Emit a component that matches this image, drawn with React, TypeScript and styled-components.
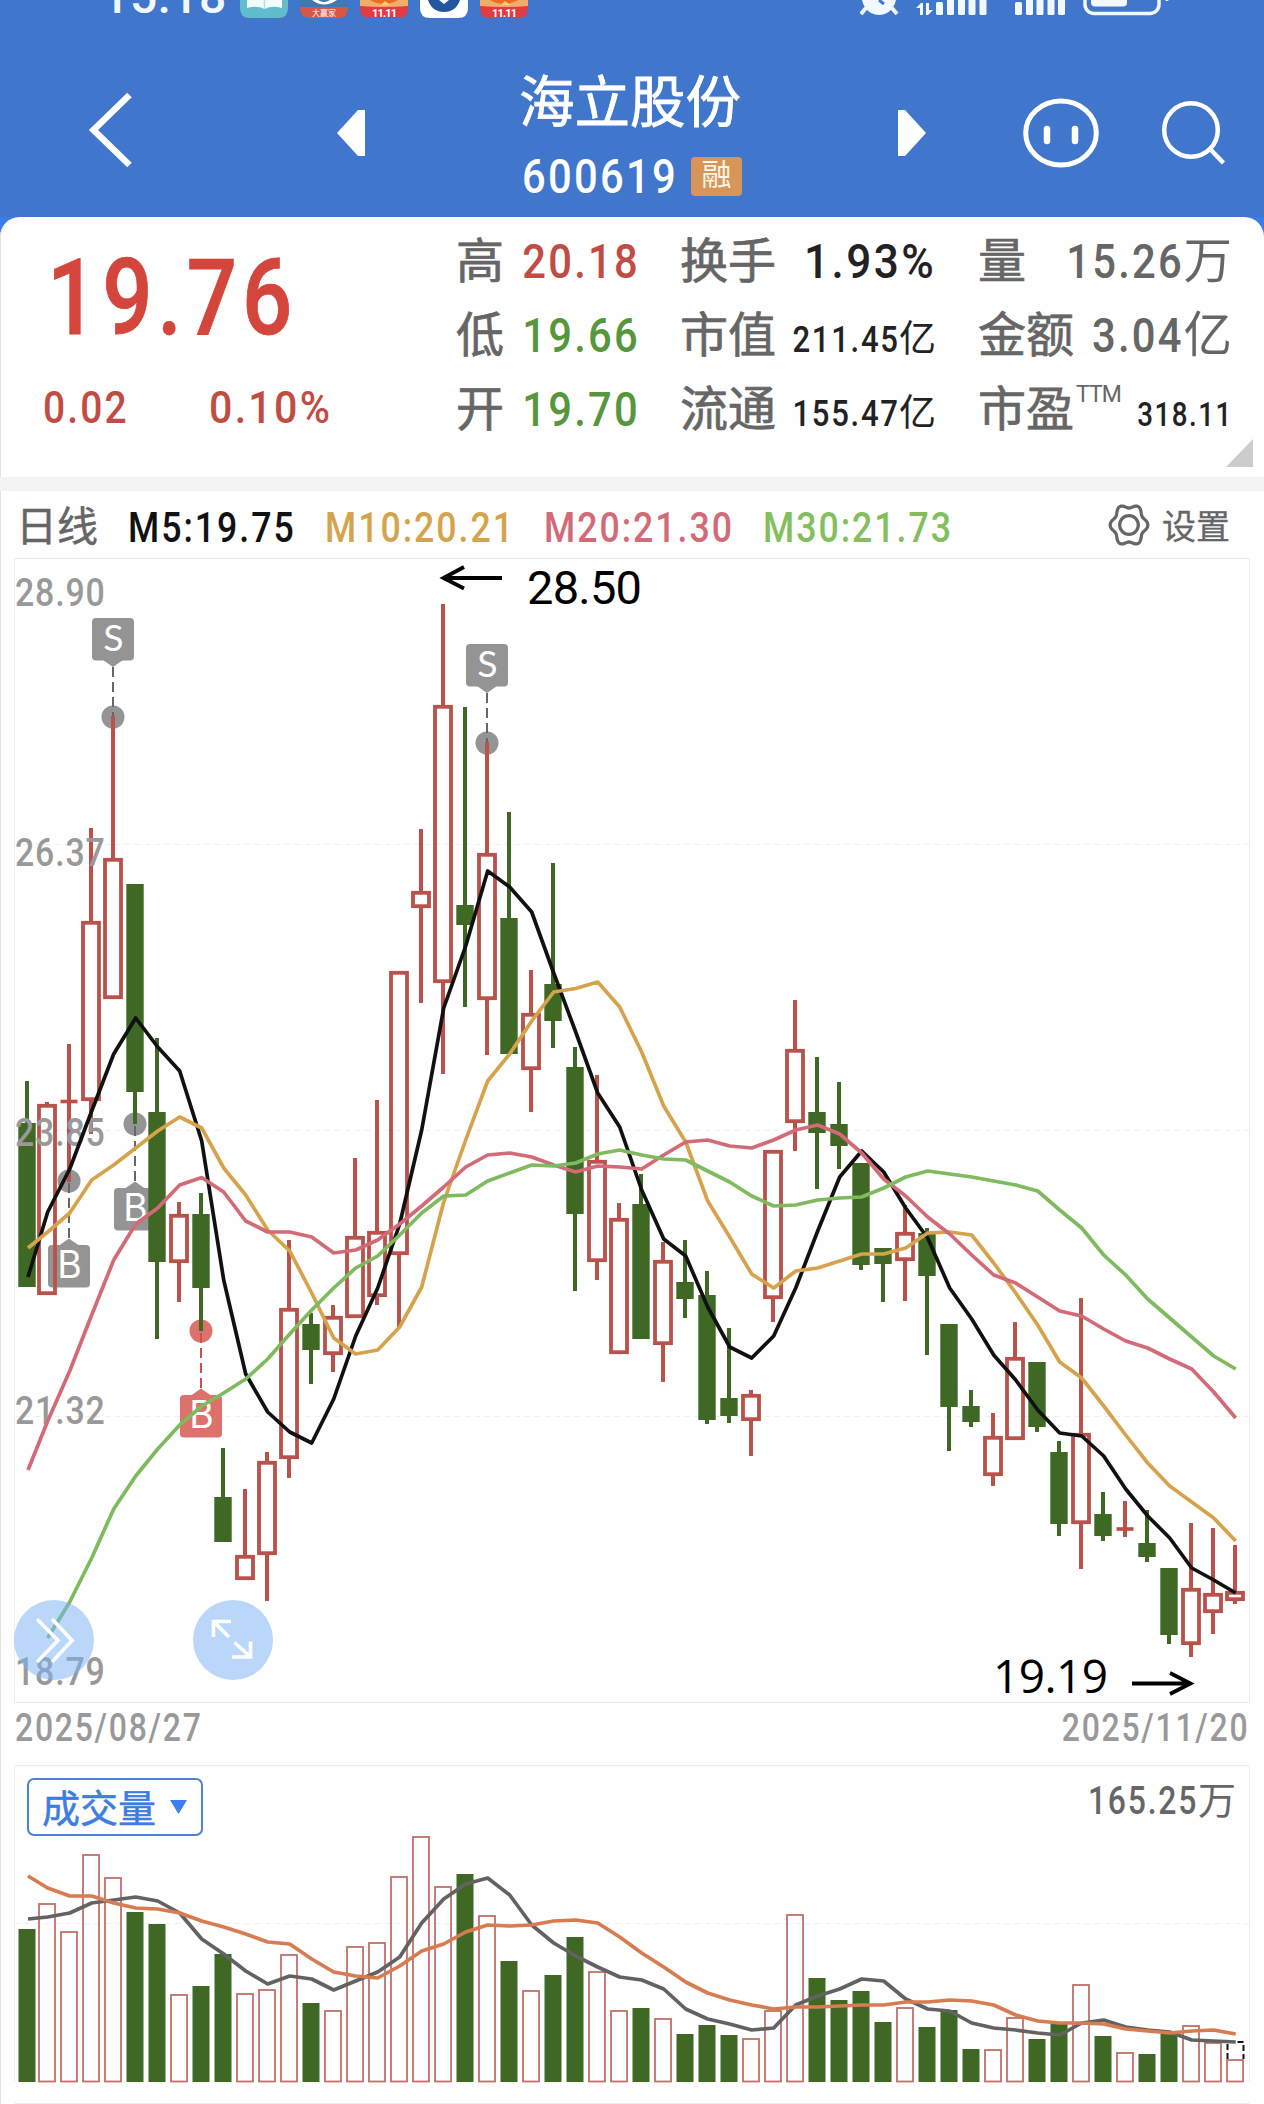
import React from "react";
import styled, { createGlobalStyle } from "styled-components";

const Global = createGlobalStyle`
  html, body { margin: 0; padding: 0; background: #fefefe; }
  * { box-sizing: border-box; }
  text { font-family: Roboto, "Noto Sans CJK SC", sans-serif; }
`;

const RED = "#c04c44";
const UP = "#b9524b";
const DOWN = "#3f6824";
const GREEN = "#58963c";

/* ---------- layout ---------- */

const Page = styled.div`
  width: 1264px;
  height: 2104px;
  overflow: hidden;
  display: flex;
  flex-direction: column;
  background: #fefefe;
  box-shadow: inset 1px 0 0 #e2e2e2;
  font-family: Roboto, "Noto Sans CJK SC", sans-serif;
`;

/* Condensed, evenly spaced figures */
const Figures = styled.span<{ $end?: boolean; $scale?: number }>`
  display: inline-block;
  font-weight: 500;
  white-space: nowrap;
  letter-spacing: 0.055em;
  ${(p) => (p.$end ? "margin-right: -0.015em;" : "")}
  transform: scaleX(${(p) => p.$scale ?? 0.86});
  transform-origin: ${(p) => (p.$end ? "right" : "left")} center;
`;

const Header = styled.header`
  height: 217px;
  flex: none;
  background: #4077cc;
  color: #fff;
  display: flex;
  flex-direction: column;
`;

const StatusBar = styled.div`
  height: 24px;
  display: flex;
  justify-content: space-between;
  align-items: flex-start;
  overflow: hidden;
  padding-left: 102px;
`;

const StatusLeft = styled.div`
  display: flex;
  align-items: flex-start;
  gap: 12px;
`;

const Clock = styled.span`
  width: 126px;
  margin-top: -31px;
  height: 50px;
  line-height: 56px;
  font-size: 48px;
  font-weight: 500;
  letter-spacing: 0.6px;
  white-space: nowrap;
  color: #f2f8ff;
`;

const Nav = styled.nav`
  height: 193px;
  display: grid;
  grid-template-columns: 240px 240px 304px 196px 152px 132px;
  align-items: start;
`;

const NavIcon = styled.div`
  height: 193px;
  svg { display: block; }
`;

const TitleBlock = styled.div`
  padding: 50px 0 0 39px;
  display: flex;
  flex-direction: column;
`;

const StockName = styled.h1`
  margin: 0;
  font-size: 55.5px;
  font-weight: 400;
  line-height: 60px;
  white-space: nowrap;
  -webkit-text-stroke: 0.8px #fff;
`;

const CodeRow = styled.div`
  display: flex;
  align-items: center;
  height: 52px;
  margin-top: 16px;
`;

const Code = styled.span`
  width: 172px;
  padding: 1px 0 0 3px;
  font-size: 48.5px;
  line-height: 52px;
`;

const MarginTag = styled.span`
  width: 51px;
  height: 39px;
  border-radius: 4px;
  background: #d79558;
  font-size: 30px;
  line-height: 36px;
  text-align: center;
  color: #fff6e8;
`;

const QuoteWrap = styled.div`
  flex: none;
  background: #3b7bea;
`;

const Quote = styled.section`
  height: 260px;
  border-radius: 20px 20px 0 0;
  background: #fefefe;
  box-shadow: inset 1px 0 0 #e2e2e2;
  display: grid;
  grid-template-columns: 456px 224px 298px 260px;
  padding-top: 8px;
  position: relative;
`;

const PriceBlock = styled.div`
  padding-left: 43px;
  color: ${RED};
`;

const Price = styled.div`
  height: 147px;
  line-height: 147px;
  padding-left: 4px;
  font-size: 106px;
  color: #d4453c;
  -webkit-text-stroke: 0.8px #d4453c;
`;

const ChangeRow = styled.div`
  display: flex;
  height: 74px;
  line-height: 73px;
  font-size: 44.5px;
`;

const Change = styled.span<{ $w: number }>`
  width: ${(p) => p.$w}px;
`;

const StatColumn = styled.div<{ $w: number }>`
  width: ${(p) => p.$w}px;
  display: flex;
  flex-direction: column;
`;

const Stat = styled.div`
  height: 74px;
  display: flex;
  justify-content: space-between;
  align-items: baseline;
  line-height: 74px;
  white-space: nowrap;
`;

const StatLabel = styled.span`
  flex: none;
  font-size: 48px;
  color: #666;
  -webkit-text-stroke: 0.7px #666;
`;

const Superscript = styled.sup`
  font-size: 23px;
  line-height: 0;
  vertical-align: 24px;
  margin-left: 2px;
  letter-spacing: -1px;
  -webkit-text-stroke: 0;
`;

const StatValue = styled.span<{ $size?: number; $color?: string }>`
  flex: 1 1 0;
  min-width: 0;
  display: flex;
  justify-content: flex-end;
  align-items: baseline;
  font-size: ${(p) => p.$size ?? 48.5}px;
  color: ${(p) => p.$color ?? "#222"};
`;

const Corner = styled.i`
  position: absolute;
  right: 11px;
  bottom: 10px;
  width: 27px;
  height: 28px;
  background: #ccc;
  clip-path: polygon(100% 0, 100% 100%, 0 100%);
`;

const Divider = styled.div`
  height: 14px;
  flex: none;
  background: #f3f3f3;
`;

const Legend = styled.div`
  height: 67px;
  flex: none;
  display: flex;
  align-items: center;
  padding: 6px 0 0 16px;
  font-size: 42px;
  line-height: 61px;
  white-space: nowrap;
`;

const Period = styled.span`
  width: 112px;
  font-size: 41px;
  color: #666;
  -webkit-text-stroke: 0.5px #666;
`;

const Average = styled.span<{ $w: number; $color: string }>`
  width: ${(p) => p.$w}px;
  color: ${(p) => p.$color};
`;

const Settings = styled.span`
  display: flex;
  align-items: center;
  gap: 12px;
  font-size: 34px;
  color: #666;
  -webkit-text-stroke: 0.3px #666;
  svg { margin-top: -5px; }
`;

const Dates = styled.div`
  height: 61px;
  flex: none;
  display: flex;
  justify-content: space-between;
  padding: 1px 15px 0 15px;
  font-size: 38px;
  line-height: 49px;
  color: #999;
`;

const ChartBox = styled.section<{ $h: number }>`
  height: ${(p) => p.$h}px;
  flex: none;
  svg { display: block; }
`;

const VolumeBox = styled.section`
  height: 340px;
  flex: none;
  display: grid;
  > * { grid-area: 1 / 1; }
  svg { display: block; }
`;

const VolumeHead = styled.div`
  display: flex;
  justify-content: space-between;
  align-items: flex-start;
  padding: 14px 28px 0 27px;
  z-index: 1;
`;

const IndicatorButton = styled.button`
  width: 176px;
  height: 58px;
  border: 2px solid #4c83cd;
  border-radius: 7px;
  background: #fefefe;
  padding: 0 14px 3px 13px;
  display: flex;
  align-items: center;
  justify-content: space-between;
  color: #3d7de2;
  font: 400 38px/51px "Noto Sans CJK SC", sans-serif;
  -webkit-text-stroke: 0.5px #3d7de2;
`;

const DownMark = styled.i`
  width: 17px;
  height: 14px;
  margin-top: 3px;
  background: #3a7ef0;
  clip-path: polygon(0 0, 100% 0, 50% 100%);
`;

const VolumeMax = styled.span`
  font-size: 38px;
  line-height: 44px;
  padding-top: 1px;
  color: #666;
`;

/* ---------- data ---------- */

type Candle = [kind: "r" | "g" | "x", high: number, top: number, bottom: number, low: number];

const candles: Candle[] = [
  ["g", 1081, 1123, 1287, 1287], ["r", 1102, 1104, 1295, 1295], ["x", 1044, 1101.5, 1101.5, 1182],
  ["r", 828, 921, 1101, 1134], ["r", 716, 858, 999, 999], ["g", 884, 884, 1092, 1124],
  ["g", 1038, 1112, 1262, 1339], ["r", 1202, 1214, 1263, 1302], ["g", 1193, 1214, 1288, 1331],
  ["g", 1448, 1497, 1542, 1542], ["r", 1489, 1555, 1580, 1580], ["r", 1452, 1461, 1555, 1601],
  ["r", 1240, 1308, 1459, 1478], ["g", 1313, 1324, 1350, 1384], ["r", 1305, 1316, 1355, 1372],
  ["r", 1158, 1236, 1318, 1318], ["r", 1100, 1231, 1297, 1305], ["r", 971, 971, 1255, 1328],
  ["r", 829, 891, 908, 1003], ["r", 604, 705, 983, 1074], ["g", 707, 905, 925, 1007],
  ["r", 742, 853, 1000, 1055], ["g", 812, 918, 1054, 1054], ["r", 970, 1013, 1070, 1112],
  ["g", 863, 984, 1021, 1048], ["g", 1047, 1067, 1214, 1291], ["r", 1075, 1160, 1262, 1280],
  ["r", 1203, 1218, 1354, 1354], ["g", 1174, 1204, 1339, 1339], ["r", 1242, 1260, 1345, 1382],
  ["g", 1240, 1282, 1299, 1318], ["g", 1271, 1295, 1420, 1424], ["g", 1328, 1398, 1416, 1423],
  ["r", 1390, 1394, 1421, 1456], ["r", 1150, 1150, 1299, 1322], ["r", 1000, 1049, 1123, 1151],
  ["g", 1057, 1112, 1133, 1189], ["g", 1082, 1124, 1146, 1169], ["g", 1163, 1163, 1265, 1270],
  ["g", 1248, 1248, 1264, 1302], ["r", 1205, 1232, 1261, 1301], ["g", 1228, 1233, 1276, 1355],
  ["g", 1324, 1324, 1407, 1451], ["g", 1390, 1406, 1422, 1427], ["r", 1413, 1436, 1476, 1486],
  ["r", 1322, 1357, 1440, 1440], ["g", 1362, 1362, 1427, 1432], ["g", 1441, 1452, 1524, 1536],
  ["r", 1298, 1433, 1524, 1569], ["g", 1492, 1514, 1536, 1541], ["x", 1501, 1529, 1529, 1537],
  ["g", 1510, 1543, 1557, 1562], ["g", 1568, 1568, 1635, 1644], ["r", 1523, 1588, 1645, 1657],
  ["r", 1528, 1593, 1613, 1634], ["r", 1545, 1591, 1601, 1604],
];

const ma5 = [1277, 1212, 1169, 1111, 1054, 1018, 1047, 1071, 1141, 1280, 1374, 1412, 1432, 1443, 1399, 1336, 1288, 1224, 1130, 1008, 946, 871, 887, 912, 973, 1032, 1093, 1127, 1190, 1239, 1256, 1307, 1347, 1358, 1336, 1288, 1231, 1177, 1151, 1172, 1208, 1238, 1288, 1319, 1355, 1380, 1410, 1433, 1436, 1456, 1489, 1516, 1538, 1568, 1580, 1593];
const ma10 = [1248, 1232, 1213, 1180, 1165, 1148, 1131, 1117, 1128, 1168, 1195, 1230, 1251, 1293, 1338, 1354, 1350, 1327, 1287, 1202, 1140, 1081, 1054, 1021, 992, 988.5, 982, 1007, 1052, 1106, 1142, 1201, 1237, 1274, 1288, 1271, 1268, 1261, 1254, 1254, 1248, 1233, 1232, 1235, 1263, 1293, 1325, 1362, 1378, 1406, 1435, 1463, 1486, 1502, 1518, 1541];
const ma20 = [1470, 1421, 1371, 1315, 1260, 1224, 1208, 1185, 1177.5, 1192, 1221, 1232, 1232, 1237, 1253, 1250, 1240, 1224, 1206, 1187, 1167, 1155, 1153, 1157, 1165, 1172, 1166, 1167, 1169, 1155, 1142, 1140, 1146, 1148, 1140, 1130, 1125, 1134, 1153, 1179, 1196, 1217, 1234, 1255, 1275, 1283, 1297, 1311, 1316, 1329, 1341, 1348, 1359, 1369, 1392, 1418];
const ma30 = [1638, 1602, 1558, 1509, 1476, 1449, 1425, 1406, 1393, 1379, 1359, 1334, 1310, 1288, 1268, 1256, 1235, 1213, 1196, 1195, 1181, 1173, 1165, 1166, 1163, 1154, 1150, 1155, 1159, 1160, 1171, 1182, 1196, 1206, 1205, 1200, 1198, 1197, 1188, 1177, 1171, 1174, 1177, 1181, 1185, 1191, 1210, 1228, 1255, 1275, 1299, 1318, 1337, 1356, 1369];

const volumes = [1929, 1903, 1931, 1854, 1877, 1912, 1924, 1994, 1986, 1954, 1993, 1989, 1954, 2003, 2010, 1946, 1942, 1876, 1836, 1886, 1874, 1915, 1961, 1990, 1975, 1937, 1971, 2010, 2008, 2018, 2034, 2025, 2035, 2038, 2010, 1914, 1978, 2000, 1991, 2022, 2007, 2027, 2010, 2049, 2049, 2017, 2039, 2023, 1984, 2036, 2052, 2054, 2034, 2025, 2042, 2059];
const vma5 = [1919, 1917, 1913, 1903, 1900, 1897, 1901, 1913, 1939, 1954, 1971, 1984, 1976, 1979, 1990, 1981, 1972, 1957, 1923, 1899, 1884, 1878, 1895, 1925, 1943, 1956, 1967, 1977, 1980, 1989, 2009, 2019, 2024, 2030, 2028, 2005, 1996, 1989, 1979, 1981, 1999, 2009, 2011, 2023, 2028, 2030, 2033, 2035, 2023, 2020, 2027, 2030, 2032, 2040, 2041, 2042];
const vma10 = [1876, 1888, 1896, 1896, 1903, 1908, 1909, 1913, 1921, 1927, 1934, 1942, 1944, 1959, 1972, 1976, 1978, 1966, 1951, 1944, 1932, 1925, 1926, 1925, 1921, 1920, 1923, 1937, 1953, 1967, 1982, 1993, 2000, 2005, 2009, 2007, 2007, 2006, 2005, 2005, 2002, 2002, 2000, 2001, 2005, 2015, 2021, 2023, 2023, 2024, 2029, 2031, 2033, 2031, 2030, 2034];

const xAt = (i: number) => (i === 0 ? 27 : 25 + 22 * i);
const points = (ys: number[], from = 0) =>
  ys.map((y, i) => `${xAt(i + from) + (i + from === 0 ? 1 : 0.7)},${y}`).join(" ");

/* ---------- drawings ---------- */

const CandleMark = ({ i, c }: { i: number; c: Candle }) => {
  const [kind, high, top, bottom, low] = c;
  const x = xAt(i);
  if (kind === "g")
    return (
      <g fill={DOWN}>
        <rect x={x - 2} y={high} width={4} height={low - high} />
        <rect x={x - 8.7} y={top} width={17.4} height={bottom - top} />
      </g>
    );
  if (kind === "x")
    return (
      <g fill={UP}>
        <rect x={x - 2} y={high} width={4} height={low - high} />
        <rect x={x - 8.5} y={top - 1.8} width={17} height={3.6} fill={RED} />
      </g>
    );
  return (
    <g fill={UP}>
      <rect x={x - 2} y={high} width={4} height={top - high + 1} />
      <rect x={x - 2} y={bottom - 1} width={4} height={Math.max(0, low - bottom + 1)} />
      <rect x={x - 8} y={top + 1.8} width={16} height={bottom - top - 3.6} fill="none" stroke={UP} strokeWidth={3.8} />
    </g>
  );
};

const Flag = ({ x, y, letter, dot, color, line }: { x: number; y: number; letter: string; dot: number; color: string; line: string }) => {
  const sell = letter === "S";
  const tip = sell ? y + 49 : y - 7;
  return (
    <g>
      <circle cx={x} cy={dot} r={11.5} fill={color} />
      <path d={`M${x} ${tip}V${dot}`} stroke={line} strokeWidth={2} strokeDasharray="10 5" />
      <rect x={x - 21} y={y} width={42} height={42.5} rx={4} fill={color} />
      <path
        d={sell ? `M${x - 10} ${y + 42}h20l-10 7z` : `M${x - 10} ${y + 0.5}h20l-10 -7z`}
        fill={color}
      />
      <text x={x + 0.5} y={y + 33} textAnchor="middle" fill="#fff" fontSize={37.5} style={{ fontFamily: sell ? "Lato" : "Inter" }}>
        {letter}
      </text>
    </g>
  );
};

const axis: [string, number][] = [
  ["28.90", 606], ["26.37", 866], ["23.85", 1145.5], ["21.32", 1423.5], ["18.79", 1684.5],
];

const GRAY = "#949494";

const PriceChart = () => (
  <svg width="1264" height="1145" viewBox="0 558 1264 1145">
    <rect x="14.5" y="558.5" width="1235" height="1144" fill="none" stroke="#ececec" />
    {[844.5, 1130.5, 1416.5].map((y) => (
      <path key={y} d={`M15 ${y}H1249`} stroke="#eee" strokeDasharray="5 5" />
    ))}
    <Flag x={113} y={618} letter="S" dot={717} color={GRAY} line="#666" />
    <Flag x={487} y={644} letter="S" dot={743} color={GRAY} line="#666" />
    <Flag x={69} y={1245} letter="B" dot={1181} color={GRAY} line="#666" />
    <Flag x={135} y={1188} letter="B" dot={1124} color={GRAY} line="#666" />
    <Flag x={201} y={1395} letter="B" dot={1331} color="#dd716c" line="#c9514b" />
    {candles.map((c, i) => (
      <CandleMark key={i} i={i} c={c} />
    ))}
    {axis.map(([t, y]) => (
      <g key={t} transform={`translate(15 ${y}) scale(0.89 1)`}>
        <text fontSize="38" fontWeight="500" fill="#999" letterSpacing="1">{t}</text>
      </g>
    ))}
    <g fill="none" strokeWidth="3.7" strokeLinejoin="round">
      <polyline points={points(ma5)} stroke="#111" />
      <polyline points={points(ma10)} stroke="#d5a34c" />
      <polyline points={points(ma20)} stroke="#d36a77" />
      <polyline points={points(ma30, 1)} stroke="#7fba5e" />
    </g>
    <g fill="none" stroke="#000" strokeWidth="3.8">
      <path d="M502 578H444M464 567L443.500 578L464 588.500" />
      <path d="M1132 1683.500H1190M1170 1673L1190.500 1683.500L1170 1694" />
    </g>
    <text x="527" y="604" fontSize="47" fill="#000" textLength="115">28.50</text>
    <text x="993" y="1693" fontSize="46" fill="#000" textLength="115" style={{ fontFamily: "Open Sans" }}>19.19</text>
    <g fill="#7ab2f5" fillOpacity="0.52">
      <circle cx="54" cy="1640" r="40" />
      <circle cx="233" cy="1640" r="40" />
    </g>
    <g fill="none" stroke="#fff" strokeWidth="3.6">
      <path d="M37 1619L58 1640.500L37 1662M52 1619L72 1640.500L52 1662" />
      <path d="M231 1621.500H213.500V1637M214 1622L229 1637M232 1657H250.500V1641.500M250 1656.500L234.500 1642.500" />
    </g>
  </svg>
);

const VolumeChart = () => (
  <svg width="1264" height="340" viewBox="0 1764 1264 340">
    <path d="M14.500 2082V1765.500H1249.500V2082M14.500 2103.500H1249.500" fill="none" stroke="#ececec" />
    <path d="M15 1923.500H1249" stroke="#eee" strokeDasharray="5 5" />
    {volumes.map((y, i) => {
      const x = xAt(i);
      return candles[i][0] === "g" ? (
        <rect key={i} x={x - 8.5} y={y} width={17} height={2082 - y} fill={DOWN} />
      ) : (
        <rect key={i} x={x - 8} y={y + 1} width={16} height={2080.5 - y} fill="none" stroke="#c1706a" strokeWidth="1.8" />
      );
    })}
    <path d="M1227.500 2059V2042H1243.500V2059" fill="none" stroke="#111" strokeWidth="2" strokeDasharray="6 3" />
    <g fill="none" strokeWidth="3.7" strokeLinejoin="round">
      <polyline points={points(vma5)} stroke="#626262" />
      <polyline points={points(vma10)} stroke="#d67c50" />
    </g>
  </svg>
);

const AppIcons = () => (
  <svg width="290" height="20" viewBox="240 0 290 20">
    <path d="M240 0H288V8Q288 18 278 18H250Q240 18 240 8Z" fill="#61bccd" />
    <path d="M247 0H282V8Q272 5 264.500 9Q257 5 247 8Z" fill="#f4fbfb" />
    <path d="M264.500 0V9" stroke="#b5dfe3" strokeWidth="1.500" />
    <path d="M300 0H348V8Q348 18 338 18H310Q300 18 300 8Z" fill="#3d79b3" />
    <path d="M300 7H348V8Q348 18 338 18H310Q300 18 300 8Z" fill="#d95548" />
    <path d="M312 0Q324 9 337 0H330Q324 4 318 0Z" fill="#fff" />
    <text x="324" y="15.500" fontSize="8" fill="#fff" textAnchor="middle">大赢家</text>
    {[360, 480].map((x) => (
      <g key={x} transform={`translate(${x} 0)`}>
        <path d="M0 0H48V8Q48 18 38 18H10Q0 18 0 8Z" fill="#e23b44" />
        <path d="M0 0H48V6Q24 8 0 6Z" fill="#f1ad6a" />
        <path d="M10 0Q24 8 38 0Z" fill="#ee6b22" />
        <path d="M21 5L25 1L30 5Z" fill="#f9d27c" />
        <text x="12" y="16.500" fontSize="11" fontWeight="700" fill="#fff" textLength="25">11.11</text>
      </g>
    ))}
    <path d="M420 0H468V8Q468 18 458 18H430Q420 18 420 8Z" fill="#fff" />
    <path d="M428 0Q432 12 444 12Q456 12 460 0Z" fill="#2257a0" />
    <path d="M439 0L444 4L449 0Z" fill="#fff" />
  </svg>
);

const SystemIcons = () => (
  <svg width="404" height="20" viewBox="860 0 404 20" fill="#f2f8ff">
    <path d="M862 0H896Q894 9 887 13Q879 17 871 13Q864 9 862 0Z" />
    <path d="M866 8L861 14M892 8L897 14" stroke="#f2f8ff" strokeWidth="4" />
    <path d="M879 0L884 4" stroke="#4077cc" strokeWidth="3" />
    <path d="M916 8L921 3H923V15H920V8ZM926 3H929V10H933L928 15H926Z" />
    {[936, 947, 958, 968.5, 979.5].map((x, i) => (
      <rect key={x} x={x} y={i ? -3 : 2} width="7" height={i ? 18 : 13} rx="1.500" />
    ))}
    {[1015, 1026, 1036.5, 1047.5, 1058].map((x, i) => (
      <rect key={x} x={x} y={i ? -3 : 2} width="7" height={i ? 18 : 13} rx="1.500" />
    ))}
    <rect x="1085" y="-20" width="74" height="33.500" rx="9" fill="none" stroke="#f2f8ff" strokeWidth="3.500" />
    <rect x="1091" y="-12" width="36" height="18.500" rx="4" />
    <rect x="1165" y="-6" width="4" height="7" rx="2" />
  </svg>
);

const GearIcon = () => {
  const pts: string[] = [];
  for (let d = 0; d < 360; d += 5) {
    const a = (d * Math.PI) / 180;
    const r = 17 + 1.9 * Math.cos(6 * a);
    pts.push(`${21 + r * Math.cos(a)},${21 + 1.12 * r * Math.sin(a)}`);
  }
  return (
    <svg width="42" height="42" viewBox="0 0 42 42" fill="none" stroke="#666" strokeWidth="3.200" strokeLinejoin="round">
      <polygon points={pts.join(" ")} />
      <circle cx="21" cy="21" r="9.300" />
    </svg>
  );
};

export default function App() {
  return (
    <Page>
      <Global />
      <Header>
        <StatusBar>
          <StatusLeft>
            <Clock>15:18</Clock>
            <AppIcons />
          </StatusLeft>
          <SystemIcons />
        </StatusBar>
        <Nav>
          <NavIcon>
            <svg width="240" height="193" viewBox="0 24 240 193">
              <path d="M129.500 95L93.500 130L129.500 165" fill="none" stroke="#fff" strokeWidth="6.500" />
            </svg>
          </NavIcon>
          <NavIcon>
            <svg width="240" height="193" viewBox="240 24 240 193">
              <path d="M337 133L358 110H365V156H358Z" fill="#fff" />
            </svg>
          </NavIcon>
          <TitleBlock>
            <StockName>海立股份</StockName>
            <CodeRow>
              <Code><Figures>600619</Figures></Code>
              <MarginTag>融</MarginTag>
            </CodeRow>
          </TitleBlock>
          <NavIcon>
            <svg width="196" height="193" viewBox="784 24 196 193">
              <path d="M926 133L905 110H898V156H905Z" fill="#fff" />
            </svg>
          </NavIcon>
          <NavIcon>
            <svg width="152" height="193" viewBox="980 24 152 193" fill="none" stroke="#fff">
              <ellipse cx="1061" cy="133" rx="35.300" ry="32" strokeWidth="5" />
              <path d="M1047 129V141M1075 129V141" strokeWidth="6.500" strokeLinecap="round" />
            </svg>
          </NavIcon>
          <NavIcon>
            <svg width="132" height="193" viewBox="1132 24 132 193" fill="none" stroke="#fff" strokeWidth="4.500">
              <circle cx="1191" cy="130" r="26.800" />
              <path d="M1210 149L1223.500 163" />
            </svg>
          </NavIcon>
        </Nav>
      </Header>

      <QuoteWrap>
        <Quote>
          <PriceBlock>
            <Price><Figures $scale={0.835}>19.76</Figures></Price>
            <ChangeRow>
              <Change $w={166}><Figures $scale={0.875}>0.02</Figures></Change>
              <Change $w={140}><Figures $scale={0.925}>0.10%</Figures></Change>
            </ChangeRow>
          </PriceBlock>
          <StatColumn $w={183}>
            <Stat><StatLabel>高</StatLabel><StatValue $color={RED}><Figures $end>20.18</Figures></StatValue></Stat>
            <Stat><StatLabel>低</StatLabel><StatValue $color={GREEN}><Figures $end>19.66</Figures></StatValue></Stat>
            <Stat><StatLabel>开</StatLabel><StatValue $color={GREEN}><Figures $end>19.70</Figures></StatValue></Stat>
          </StatColumn>
          <StatColumn $w={256}>
            <Stat><StatLabel>换手</StatLabel><StatValue><Figures $end $scale={0.91}>1.93%</Figures></StatValue></Stat>
            <Stat><StatLabel>市值</StatLabel><StatValue $size={37}><Figures $end $scale={0.84}>211.45</Figures>亿</StatValue></Stat>
            <Stat><StatLabel>流通</StatLabel><StatValue $size={37}><Figures $end $scale={0.84}>155.47</Figures>亿</StatValue></Stat>
          </StatColumn>
          <StatColumn $w={254}>
            <Stat><StatLabel>量</StatLabel><StatValue $color="#666"><Figures $end>15.26</Figures>万</StatValue></Stat>
            <Stat><StatLabel>金额</StatLabel><StatValue $color="#666"><Figures $end>3.04</Figures>亿</StatValue></Stat>
            <Stat><StatLabel>市盈<Superscript>TTM</Superscript></StatLabel><StatValue $size={33}><Figures $end $scale={0.84}>318.11</Figures></StatValue></Stat>
          </StatColumn>
          <Corner />
        </Quote>
      </QuoteWrap>

      <Divider />
      <Legend>
        <Period>日线</Period>
        <Average $w={197} $color="#111"><Figures $scale={0.85}>M5:19.75</Figures></Average>
        <Average $w={219} $color="#d5a34c"><Figures $scale={0.85}>M10:20.21</Figures></Average>
        <Average $w={219} $color="#d36a77"><Figures $scale={0.85}>M20:21.30</Figures></Average>
        <Average $w={345} $color="#83bf5d"><Figures $scale={0.85}>M30:21.73</Figures></Average>
        <Settings><GearIcon />设置</Settings>
      </Legend>

      <ChartBox $h={1145}><PriceChart /></ChartBox>
      <Dates><Figures $scale={0.84}>2025/08/27</Figures><Figures $end $scale={0.84}>2025/11/20</Figures></Dates>
      <VolumeBox>
        <VolumeChart />
        <VolumeHead>
          <IndicatorButton>成交量<DownMark /></IndicatorButton>
          <VolumeMax><Figures $end $scale={0.84}>165.25</Figures>万</VolumeMax>
        </VolumeHead>
      </VolumeBox>
    </Page>
  );
}
